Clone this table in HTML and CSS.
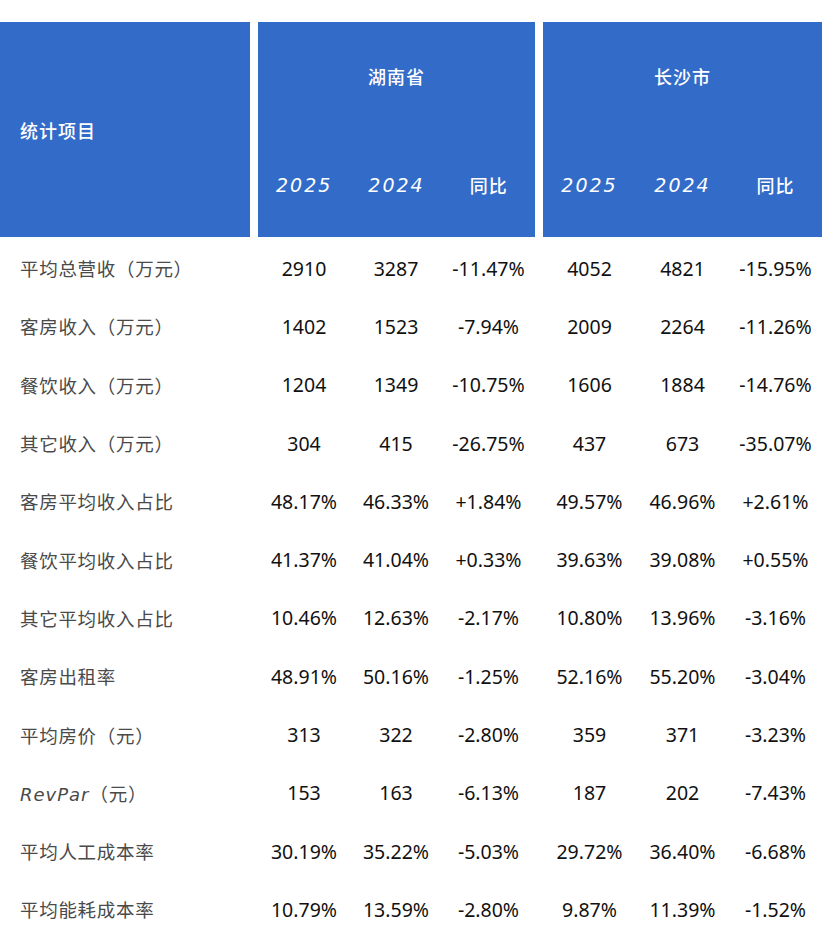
FILE: index.html
```html
<!DOCTYPE html>
<html lang="zh-CN">
<head>
<meta charset="utf-8">
<link rel="stylesheet" href="styles.css">
</head>
<body>
<div class="page">
  <div class="head">
    <div class="hblock hfirst"><span class="hlabel">统计项目</span></div>
    <div class="hblock hgroup g1">
      <div class="htitle">湖南省</div>
      <div class="hyears"><span class="yr">2025</span><span class="yr">2024</span><span class="yoy">同比</span></div>
    </div>
    <div class="hblock hgroup g2">
      <div class="htitle">长沙市</div>
      <div class="hyears"><span class="yr">2025</span><span class="yr">2024</span><span class="yoy">同比</span></div>
    </div>
  </div>
  <div class="rows">
    <div class="row"><span class="lab">平均总营收（万元）</span><span>2910</span><span>3287</span><span>-11.47%</span><span class="sp"></span><span>4052</span><span>4821</span><span>-15.95%</span></div>
    <div class="row"><span class="lab">客房收入（万元）</span><span>1402</span><span>1523</span><span>-7.94%</span><span class="sp"></span><span>2009</span><span>2264</span><span>-11.26%</span></div>
    <div class="row"><span class="lab">餐饮收入（万元）</span><span>1204</span><span>1349</span><span>-10.75%</span><span class="sp"></span><span>1606</span><span>1884</span><span>-14.76%</span></div>
    <div class="row"><span class="lab">其它收入（万元）</span><span>304</span><span>415</span><span>-26.75%</span><span class="sp"></span><span>437</span><span>673</span><span>-35.07%</span></div>
    <div class="row"><span class="lab">客房平均收入占比</span><span>48.17%</span><span>46.33%</span><span>+1.84%</span><span class="sp"></span><span>49.57%</span><span>46.96%</span><span>+2.61%</span></div>
    <div class="row"><span class="lab">餐饮平均收入占比</span><span>41.37%</span><span>41.04%</span><span>+0.33%</span><span class="sp"></span><span>39.63%</span><span>39.08%</span><span>+0.55%</span></div>
    <div class="row"><span class="lab">其它平均收入占比</span><span>10.46%</span><span>12.63%</span><span>-2.17%</span><span class="sp"></span><span>10.80%</span><span>13.96%</span><span>-3.16%</span></div>
    <div class="row"><span class="lab">客房出租率</span><span>48.91%</span><span>50.16%</span><span>-1.25%</span><span class="sp"></span><span>52.16%</span><span>55.20%</span><span>-3.04%</span></div>
    <div class="row"><span class="lab">平均房价（元）</span><span>313</span><span>322</span><span>-2.80%</span><span class="sp"></span><span>359</span><span>371</span><span>-3.23%</span></div>
    <div class="row"><span class="lab"><i class="rp">RevPar</i>（元）</span><span>153</span><span>163</span><span>-6.13%</span><span class="sp"></span><span>187</span><span>202</span><span>-7.43%</span></div>
    <div class="row"><span class="lab">平均人工成本率</span><span>30.19%</span><span>35.22%</span><span>-5.03%</span><span class="sp"></span><span>29.72%</span><span>36.40%</span><span>-6.68%</span></div>
    <div class="row"><span class="lab">平均能耗成本率</span><span>10.79%</span><span>13.59%</span><span>-2.80%</span><span class="sp"></span><span>9.87%</span><span>11.39%</span><span>-1.52%</span></div>
  </div>
</div>
</body>
</html>
```
FILE: styles.css
```css
html, body {
  margin: 0;
  padding: 0;
  background: #ffffff;
}
.page {
  width: 825px;
  height: 936px;
  overflow: hidden;
  padding-top: 22px;
  box-sizing: border-box;
  font-family: "Noto Sans", "Noto Sans CJK SC", sans-serif;
}
.head {
  display: flex;
  gap: 8px;
  height: 215px;
}
.hblock {
  background: #336bc8;
  color: #ffffff;
}
.hfirst {
  width: 250px;
  display: flex;
  align-items: center;
  padding-left: 20px;
  box-sizing: border-box;
}
.hlabel, .htitle, .yoy {
  font-family: "Noto Sans CJK SC", sans-serif;
  font-weight: 500;
  font-size: 18px;
  letter-spacing: 1px;
}
.hgroup {
  display: flex;
  flex-direction: column;
}
.g1 { width: 277px; }
.g2 { width: 279px; }
.htitle {
  height: 108px;
  display: flex;
  align-items: center;
  justify-content: center;
}
.hyears {
  flex: 1;
  display: grid;
  grid-template-columns: 1fr 1fr 1fr;
  align-items: center;
  padding-top: 2px;
}
.hyears span {
  text-align: center;
}
.yr {
  font-family: "DejaVu Sans", sans-serif;
  font-style: italic;
  font-size: 19px;
  letter-spacing: 2px;
}
.rows {
  margin-top: 2px;
}
.row {
  display: grid;
  grid-template-columns: 258px 92px 92px 93px 8px 93px 93px 93px;
  height: 58.3px;
  align-items: center;
  font-size: 19.5px;
  color: #111111;
}
.row span {
  text-align: center;
}
.row .lab {
  text-align: left;
  padding-left: 20px;
  color: #4a4a4a;
  font-family: "Noto Sans CJK SC", sans-serif;
  font-size: 18.5px;
  letter-spacing: 0.7px;
}
.rp {
  font-family: "DejaVu Sans", sans-serif;
  font-style: italic;
  font-size: 18px;
  letter-spacing: 1px;
}
```
